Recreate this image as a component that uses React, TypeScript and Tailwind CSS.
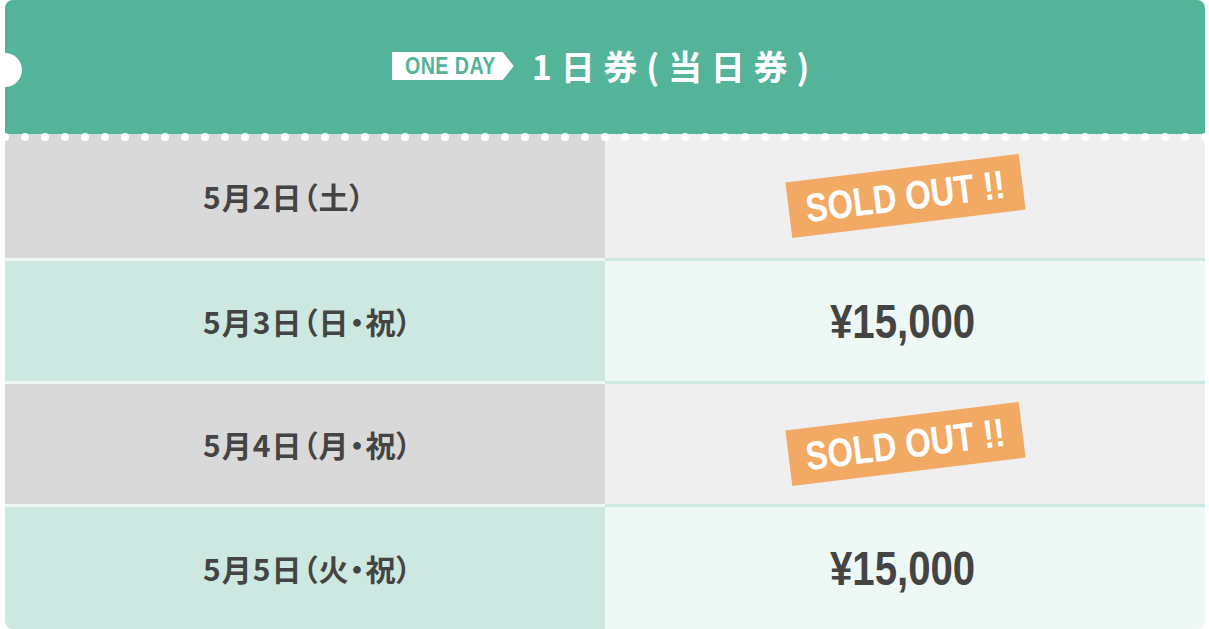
const rows = [
  { date: "5月2日（土）", soldOut: true, h: "h-[124px]" },
  { date: "5月3日（日・祝）", soldOut: false, h: "h-[126px]" },
  { date: "5月4日（月・祝）", soldOut: true, h: "h-[120px]" },
  { date: "5月5日（火・祝）", soldOut: false, h: "flex-1" },
];

// no condensed face installed, so squeeze Liberation Sans
const narrow = "font-['Liberation_Sans',Arial,sans-serif] inline-block scale-x-[0.82] whitespace-nowrap";
const jp = "font-['Noto_Sans_CJK_JP','Noto_Sans',sans-serif] [font-feature-settings:'palt']";

function SoldOut() {
  return (
    <div className="w-[235px] h-[56px] bg-[#f2a964] -rotate-[7deg] flex items-center justify-center">
      <span className={`${narrow} font-bold text-[40px] leading-none text-white`}>SOLD OUT !!</span>
    </div>
  );
}

export default function App() {
  return (
    <div className="w-[1209px] h-[629px] bg-white">
      <div className="relative ml-[5px] w-[1200px] h-[629px] rounded-[8px] overflow-hidden flex flex-col">
        {/* header */}
        <div className="h-[134px] shrink-0 bg-[#53b499] flex items-center justify-center gap-[18px] pb-[2px]">
          <div className="h-[28px] w-[122px] bg-white [clip-path:polygon(0_0,calc(100%-11px)_0,100%_50%,calc(100%-11px)_100%,0_100%)] flex items-center pl-[13px]">
            <span className={`${narrow} origin-left font-bold text-[24px] leading-none text-[#53b499] tracking-[0.5px]`}>
              ONE DAY
            </span>
          </div>
          <span className={`${jp} font-bold text-[34px] leading-none text-white tracking-[0.26em]`}>
            1日券(当日券)
          </span>
        </div>
        <div className="absolute left-[-17px] top-[53px] w-[34px] h-[34px] rounded-full bg-white" />
        <div className="absolute left-[-4px] top-[133px] flex gap-[12px]">
          {Array.from({ length: 61 }).map((_, i) => (
            <span key={i} className="block w-[8px] h-[8px] rounded-full bg-white" />
          ))}
        </div>

        {/* rows */}
        {rows.map((r, i) => {
          const mint = i % 2 === 1;
          const last = i === rows.length - 1;
          return (
            <div key={r.date} className={`flex ${r.h}`}>
              <div
                className={`w-[600px] flex items-center pl-[198px] ${
                  mint
                    ? `bg-[#cce8e0] border-t-[3px] border-[#eef8f4] ${last ? "" : "border-b-[3px]"}`
                    : "bg-[#d9d9d9]"
                }`}
              >
                <span className={`${jp} font-bold text-[30px] leading-none text-[#444] tracking-[1px]`}>
                  {r.date}
                </span>
              </div>
              <div
                className={`flex-1 flex items-center justify-center ${
                  mint
                    ? `bg-[#eef8f4] border-t-[3px] border-[#cce8e0] ${last ? "" : "border-b-[3px]"}`
                    : "bg-[#efefef]"
                }`}
              >
                {r.soldOut ? (
                  <SoldOut />
                ) : (
                  <span className={`${narrow} font-bold text-[49px] leading-none text-[#444] -ml-[4px]`}>
                    ¥15,000
                  </span>
                )}
              </div>
            </div>
          );
        })}
      </div>
    </div>
  );
}
